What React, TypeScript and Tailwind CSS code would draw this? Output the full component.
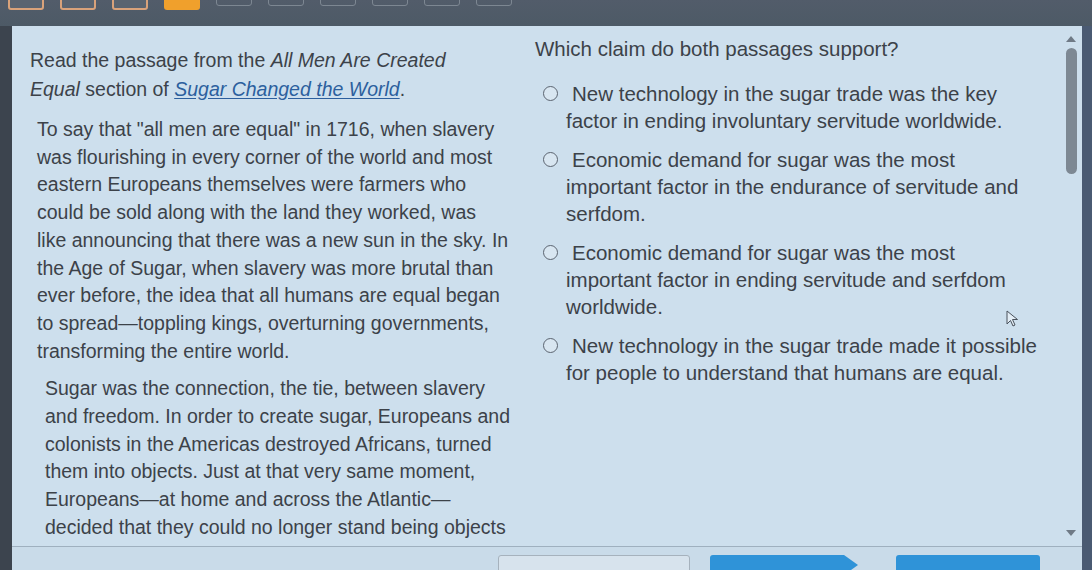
import React from "react";

const TABS = ["orange", "orange", "orange", "filled", "grey", "grey", "grey", "grey", "grey", "grey"];

const PARA_1 = [
  'To say that "all men are equal" in 1716, when slavery',
  "was flourishing in every corner of the world and most",
  "eastern Europeans themselves were farmers who",
  "could be sold along with the land they worked, was",
  "like announcing that there was a new sun in the sky. In",
  "the Age of Sugar, when slavery was more brutal than",
  "ever before, the idea that all humans are equal began",
  "to spread—toppling kings, overturning governments,",
  "transforming the entire world.",
];

const PARA_2 = [
  "Sugar was the connection, the tie, between slavery",
  "and freedom. In order to create sugar, Europeans and",
  "colonists in the Americas destroyed Africans, turned",
  "them into objects. Just at that very same moment,",
  "Europeans—at home and across the Atlantic—",
  "decided that they could no longer stand being objects",
];

const OPTIONS = [
  ["New technology in the sugar trade was the key", "factor in ending involuntary servitude worldwide."],
  ["Economic demand for sugar was the most", "important factor in the endurance of servitude and", "serfdom."],
  ["Economic demand for sugar was the most", "important factor in ending servitude and serfdom", "worldwide."],
  ["New technology in the sugar trade made it possible", "for people to understand that humans are equal."],
];

function Radio() {
  return <span className="mt-[6px] block h-[15px] w-[15px] shrink-0 rounded-full border-[1.5px] border-[#5b6470] bg-[#d8e6f1]" />;
}

export default function App() {
  return (
    <div className="flex h-[570px] w-[1092px] flex-col overflow-hidden bg-[#4b5767] text-[#3c4249]" style={{ fontFamily: '"Liberation Sans", Arial, sans-serif' }}>
      {/* top tab strip */}
      <div className="flex h-[26px] shrink-0 items-start gap-[16px] bg-gradient-to-b from-[#525c6a] to-[#4d5a66] pl-[8px]">
        {TABS.map((t, i) => (
          <div
            key={i}
            className={
              t === "filled"
                ? "-mt-[4px] h-[14px] w-[36px] rounded-[3px] bg-[#f0a02c]"
                : t === "orange"
                ? "-mt-[4px] h-[14px] w-[36px] rounded-[3px] border-2 border-[#d9a27a] bg-[#5a6470]"
                : "-mt-[6px] h-[12px] w-[36px] rounded-[3px] border border-[#7d8792]"
            }
          />
        ))}
      </div>

      <div className="flex min-h-0 flex-1">
        <div className="w-[12px] shrink-0 bg-[#3c444e]" />

        <div className="flex min-w-0 flex-1 flex-col bg-[#cddfed]">
          <div className="flex min-h-0 flex-1">
            {/* passage */}
            <div className="w-[508px] shrink-0 whitespace-nowrap pl-[18px] pt-[20px] text-[19.5px] leading-[27.7px]">
              <p className="leading-[29px]">
                Read the passage from the <i>All Men Are Created</i>
                <br />
                <i>Equal</i> section of{" "}
                <span className="text-[#2c5f9e] underline decoration-[#2c5f9e] underline-offset-2 italic">Sugar Changed the World</span>.
              </p>
              <p className="mt-[12px] pl-[7px]">
                {PARA_1.map((l, i) => (
                  <span key={i} className="block">{l}</span>
                ))}
              </p>
              <p className="mt-[10px] pl-[15px]">
                {PARA_2.map((l, i) => (
                  <span key={i} className="block">{l}</span>
                ))}
              </p>
            </div>

            {/* question */}
            <div className="min-w-0 flex-1 whitespace-nowrap pl-[15px] pt-[9px] text-[20.5px] leading-[27px]">
              <p>Which claim do both passages support?</p>
              <div className="mt-[18px] flex flex-col gap-[12px]">
                {OPTIONS.map((o, i) => (
                  <label key={i} className="flex items-start gap-[14px] pl-[8px]">
                    <Radio />
                    <span>
                      {o.map((l, j) => (
                        <span key={j} className={j === 0 ? "block" : "-ml-[6px] block"}>{l}</span>
                      ))}
                    </span>
                  </label>
                ))}
              </div>
            </div>

            {/* scrollbar */}
            <div className="relative flex w-[22px] shrink-0 flex-col items-center pt-[10px]">
              <svg width="10" height="6" viewBox="0 0 10 6"><path d="M0 6 L5 0 L10 6 Z" fill="#6f7a86" /></svg>
              <div className="mt-[6px] h-[126px] w-[11px] rounded-full bg-[#7d8893]" />
              <div className="flex-1" />
              <svg className="mb-[10px]" width="10" height="6" viewBox="0 0 10 6"><path d="M0 0 L10 0 L5 6 Z" fill="#6f7a86" /></svg>
              <svg className="absolute left-[-54px] top-[284px]" width="14" height="18" viewBox="0 0 14 18">
                <path d="M1 1 L1 14 L4.5 10.5 L7 16 L9 15 L6.5 9.5 L11.5 9.5 Z" fill="#e3edf5" stroke="#4a525c" strokeWidth="1" />
              </svg>
            </div>
          </div>

          {/* footer */}
          <div className="h-[24px] shrink-0 border-t border-[#9fb0bf] bg-[#c9dbe9]">
            <div className="flex items-start gap-[20px] pl-[486px] pt-[8px]">
              <div className="h-[20px] w-[192px] rounded-[3px] border border-[#a6b2bd] bg-[#d7e3ed]" />
              <div className="relative h-[20px] w-[134px] rounded-l-[3px] bg-[#2f93d8]">
                <div className="absolute right-[-14px] top-0 h-0 w-0 border-y-[10px] border-l-[14px] border-y-transparent border-l-[#2f93d8]" />
              </div>
              <div className="ml-[32px] h-[20px] w-[144px] rounded-[3px] bg-[#2f93d8]" />
            </div>
          </div>
        </div>

        <div className="w-[10px] shrink-0 bg-[#4a5a72]" />
      </div>
    </div>
  );
}
